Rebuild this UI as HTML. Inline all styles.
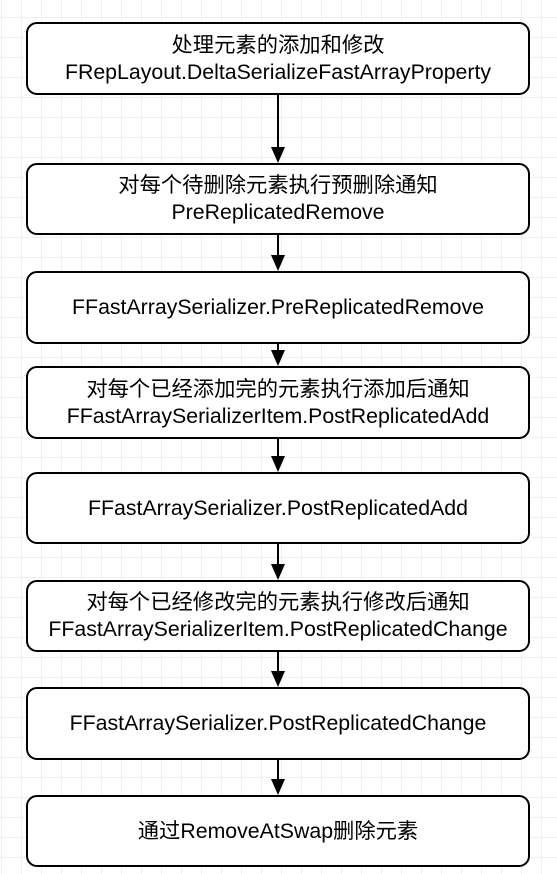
<!DOCTYPE html><html><head><meta charset="utf-8"><style>
body{margin:0;width:557px;height:874px;position:relative;overflow:hidden;background:#fff;
background-image:linear-gradient(#f0f0f0 1px,transparent 1px),linear-gradient(90deg,#f0f0f0 1px,transparent 1px);
background-size:20px 20px;background-position:0 17px,1px 0;
font-family:"Liberation Sans","Noto Sans CJK SC",sans-serif;}
.b{position:absolute;left:26px;width:500px;border:2px solid #000;border-radius:11px;background:#fff;
display:flex;align-items:center;justify-content:center;text-align:center;font-size:21.3px;line-height:27px;color:#000;white-space:nowrap}
.a{position:absolute;left:277px;width:2px;background:#000}
.h{position:absolute;left:271px;width:0;height:0;border-left:7px solid transparent;border-right:7px solid transparent;border-top:16px solid #000}
</style></head><body>
<div class="b" style="top:22px;height:69px">处理元素的添加和修改<br>FRepLayout.DeltaSerializeFastArrayProperty</div>
<div class="a" style="top:93px;height:56px"></div><div class="h" style="top:147px"></div>
<div class="b" style="top:163px;height:68px">对每个待删除元素执行预删除通知<br>PreReplicatedRemove</div>
<div class="a" style="top:233px;height:24px"></div><div class="h" style="top:255px"></div>
<div class="b" style="top:271px;height:69px">FFastArraySerializer.PreReplicatedRemove</div>
<div class="a" style="top:342px;height:10px"></div><div class="h" style="top:350px"></div>
<div class="b" style="top:366px;height:69px">对每个已经添加完的元素执行添加后通知<br>FFastArraySerializerItem.PostReplicatedAdd</div>
<div class="a" style="top:437px;height:20px"></div><div class="h" style="top:456px"></div>
<div class="b" style="top:472px;height:68px">FFastArraySerializer.PostReplicatedAdd</div>
<div class="a" style="top:542px;height:22px"></div><div class="h" style="top:564px"></div>
<div class="b" style="top:580px;height:68px">对每个已经修改完的元素执行修改后通知<br>FFastArraySerializerItem.PostReplicatedChange</div>
<div class="a" style="top:650px;height:22px"></div><div class="h" style="top:671px"></div>
<div class="b" style="top:687px;height:69px">FFastArraySerializer.PostReplicatedChange</div>
<div class="a" style="top:758px;height:22px"></div><div class="h" style="top:779px"></div>
<div class="b" style="top:795px;height:68px">通过RemoveAtSwap删除元素</div>
</body></html>
